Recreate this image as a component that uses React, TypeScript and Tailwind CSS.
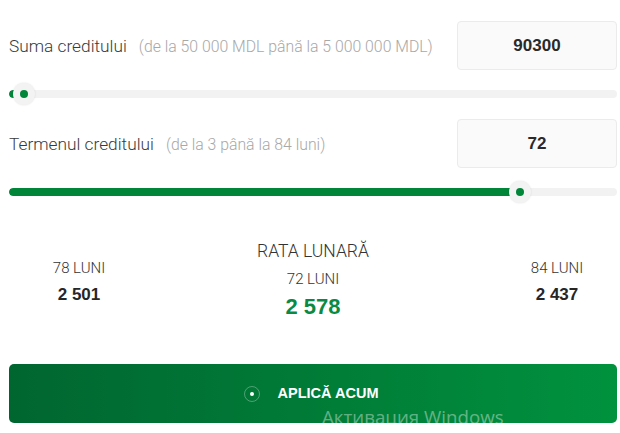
import React from "react";

const Slider = ({ percent }: { percent: number }) => {
  return (
    <div className="relative h-[22px] flex items-center">
      <div className="w-full h-2 rounded-full bg-[#f2f2f2] overflow-hidden">
        <div className="h-full rounded-full bg-[#008539]" style={{ width: `${percent}%` }} />
      </div>
      <div
        className="absolute top-0 w-[22px] h-[22px] -ml-[11px] rounded-full bg-[#f3f3f3] shadow-[0_0_2px_rgba(0,0,0,0.12)] flex items-center justify-center"
        style={{ left: `${percent}%` }}
      >
        <div className="w-2 h-2 rounded-full bg-[#008539]" />
      </div>
    </div>
  );
};

const Field = ({ label, hint, value }: { label: string; hint: string; value: string }) => {
  return (
    <div className="flex items-center justify-between h-[49px]">
      <div className="flex items-baseline pt-[3px] font-['Roboto',sans-serif] font-light">
        <span className="text-[17.3px] text-[#3a3a3a]">{label}</span>
        <span className="ml-[12px] text-[15.8px] text-[#a8a8a8]">{hint}</span>
      </div>
      <div className="w-[160px] h-full rounded-[4px] border border-[#ebebeb] bg-[#fafafa] flex items-center justify-center font-['Liberation_Sans',sans-serif] font-bold text-[17px] text-[#2a2a2a]">
        {value}
      </div>
    </div>
  );
};

const Option = ({ months, rate }: { months: string; rate: string }) => {
  return (
    <div className="flex flex-col items-center pt-[19px]">
      <span className="font-['Roboto',sans-serif] font-light text-[15px] leading-4 text-[#333]">{months}</span>
      <span className="mt-[9px] font-['Liberation_Sans',sans-serif] font-bold text-[17px] leading-5 text-[#262626]">{rate}</span>
    </div>
  );
};

export default function App() {
  return (
    <div className="relative w-[620px] h-[433px] bg-white overflow-hidden pl-[9px] pr-[3px] pt-[21px]">
      <Field label="Suma creditului" hint="(de la 50 000 MDL până la 5 000 000 MDL)" value="90300" />
      <div className="mt-[13px]">
        <Slider percent={2.5} />
      </div>
      <div className="mt-[14px]">
        <Field label="Termenul creditului" hint="(de la 3 până la 84 luni)" value="72" />
      </div>
      <div className="mt-[13px]">
        <Slider percent={84} />
      </div>

      <div className="mt-[38px] flex">
        <div className="w-[140px]">
          <Option months="78 LUNI" rate="2 501" />
        </div>
        <div className="flex-1 flex flex-col items-center pr-[20px]">
          <span className="font-['Roboto',sans-serif] font-light text-[17.5px] leading-5 text-[#333]">RATA LUNARĂ</span>
          <span className="mt-[10px] font-['Roboto',sans-serif] font-light text-[15px] leading-4 text-[#333]">72 LUNI</span>
          <span className="mt-[8px] font-['Liberation_Sans',sans-serif] font-bold text-[22px] leading-6 text-[#0b8a43]">2 578</span>
        </div>
        <div className="w-[120px]">
          <Option months="84 LUNI" rate="2 437" />
        </div>
      </div>

      <button className="mt-[45px] w-full h-[59px] rounded-[5px] bg-gradient-to-r from-[#006630] to-[#00923e] flex items-center justify-center pr-[4px]">
        <span className="w-[16px] h-[16px] rounded-full border border-white/30 flex items-center justify-center">
          <span className="w-[4px] h-[4px] rounded-full bg-white" />
        </span>
        <span className="ml-[18px] font-['Liberation_Sans',sans-serif] font-bold text-[14.5px] text-white">APLICĂ ACUM</span>
      </button>

      <div className="absolute left-[322px] top-[405px] font-['Open_Sans',sans-serif] text-[18.7px] leading-6 text-white/40">
        Активация Windows
      </div>
    </div>
  );
}
